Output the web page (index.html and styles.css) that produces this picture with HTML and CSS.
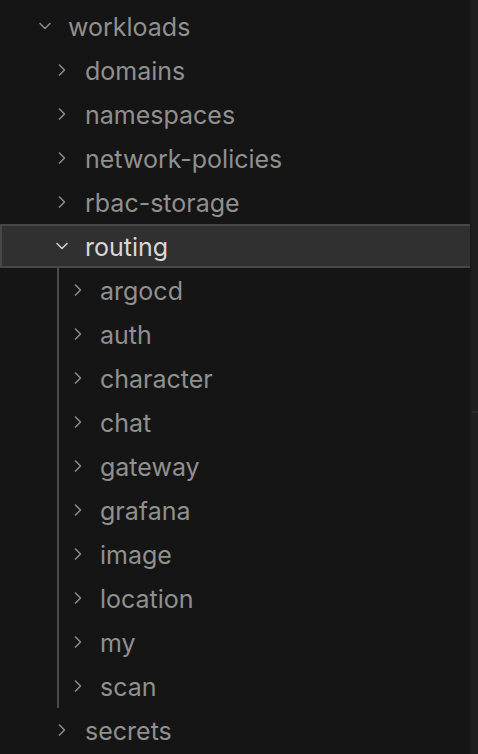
FILE: index.html
```html
<!DOCTYPE html>
<html>
<head>
<meta charset="utf-8">
<link rel="stylesheet" href="styles.css">
</head>
<body>
<div class="explorer">
  <div class="tree">
    <div class="row lvl0"><svg class="chev" viewBox="0 0 16 16"><path d="M3 5.5l5 5 5-5"/></svg><span class="label">workloads</span></div>
    <div class="row lvl1"><svg class="chev" viewBox="0 0 16 16"><path d="M5.5 3l5 5-5 5"/></svg><span class="label">domains</span></div>
    <div class="row lvl1"><svg class="chev" viewBox="0 0 16 16"><path d="M5.5 3l5 5-5 5"/></svg><span class="label">namespaces</span></div>
    <div class="row lvl1"><svg class="chev" viewBox="0 0 16 16"><path d="M5.5 3l5 5-5 5"/></svg><span class="label">network-policies</span></div>
    <div class="row lvl1"><svg class="chev" viewBox="0 0 16 16"><path d="M5.5 3l5 5-5 5"/></svg><span class="label">rbac-storage</span></div>
    <div class="row lvl1 selected"><svg class="chev" viewBox="0 0 16 16"><path d="M3 5.5l5 5 5-5"/></svg><span class="label">routing</span></div>
    <div class="group">
      <div class="row lvl2"><svg class="chev" viewBox="0 0 16 16"><path d="M5.5 3l5 5-5 5"/></svg><span class="label">argocd</span></div>
      <div class="row lvl2"><svg class="chev" viewBox="0 0 16 16"><path d="M5.5 3l5 5-5 5"/></svg><span class="label">auth</span></div>
      <div class="row lvl2"><svg class="chev" viewBox="0 0 16 16"><path d="M5.5 3l5 5-5 5"/></svg><span class="label">character</span></div>
      <div class="row lvl2"><svg class="chev" viewBox="0 0 16 16"><path d="M5.5 3l5 5-5 5"/></svg><span class="label">chat</span></div>
      <div class="row lvl2"><svg class="chev" viewBox="0 0 16 16"><path d="M5.5 3l5 5-5 5"/></svg><span class="label">gateway</span></div>
      <div class="row lvl2"><svg class="chev" viewBox="0 0 16 16"><path d="M5.5 3l5 5-5 5"/></svg><span class="label">grafana</span></div>
      <div class="row lvl2"><svg class="chev" viewBox="0 0 16 16"><path d="M5.5 3l5 5-5 5"/></svg><span class="label">image</span></div>
      <div class="row lvl2"><svg class="chev" viewBox="0 0 16 16"><path d="M5.5 3l5 5-5 5"/></svg><span class="label">location</span></div>
      <div class="row lvl2"><svg class="chev" viewBox="0 0 16 16"><path d="M5.5 3l5 5-5 5"/></svg><span class="label">my</span></div>
      <div class="row lvl2"><svg class="chev" viewBox="0 0 16 16"><path d="M5.5 3l5 5-5 5"/></svg><span class="label">scan</span></div>
    </div>
    <div class="row lvl1"><svg class="chev" viewBox="0 0 16 16"><path d="M5.5 3l5 5-5 5"/></svg><span class="label">secrets</span></div>
  </div>
  <div class="scroll">
    <div class="track-top"></div>
    <div class="track-bottom"></div>
  </div>
</div>
</body>
</html>
```

FILE: styles.css
```css
html, body {
  margin: 0;
  padding: 0;
  background: #151515;
  height: 100%;
  overflow: hidden;
}
.explorer {
  display: flex;
  height: 754px;
  font-family: Inter, "Liberation Sans", sans-serif;
}
.tree {
  flex: 1;
  padding-top: 4px;
  min-width: 0;
}
.row {
  height: 44px;
  box-sizing: border-box;
  display: flex;
  align-items: center;
  font-size: 25px;
  color: #909090;
  white-space: nowrap;
}
.label {
  padding-top: 2px;
}
.chev {
  width: 16px;
  height: 16px;
  flex: none;
  fill: none;
  stroke: #8a8a8a;
  stroke-width: 1.6;
  stroke-linecap: round;
  stroke-linejoin: round;
}
.lvl0 { padding-left: 37px; }
.lvl0 .label { margin-left: 15px; }
.lvl1 { padding-left: 54px; }
.lvl1 .label { margin-left: 15px; }
.lvl2 { padding-left: 70px; }
.lvl2 .label { margin-left: 14px; }
.selected {
  background: #303030;
  border: 2px solid #474747;
  border-right: none;
  padding-left: 52px;
  color: #d8d8d8;
}
.selected .chev { stroke: #cfcfcf; }
.group {
  position: relative;
}
.group::before {
  content: "";
  position: absolute;
  left: 57px;
  top: 0;
  bottom: 0;
  width: 1.5px;
  background: #4a4a4a;
}
.scroll {
  width: 8px;
  flex: none;
  display: flex;
  flex-direction: column;
  border-left: 2px solid #1c1c1c;
  box-sizing: border-box;
}
.track-top {
  height: 411px;
  background: #1f1f1f;
  border-bottom: 2px solid #2a2a2a;
}
.track-bottom {
  flex: 1;
  background: #1e1e1e;
}
```
